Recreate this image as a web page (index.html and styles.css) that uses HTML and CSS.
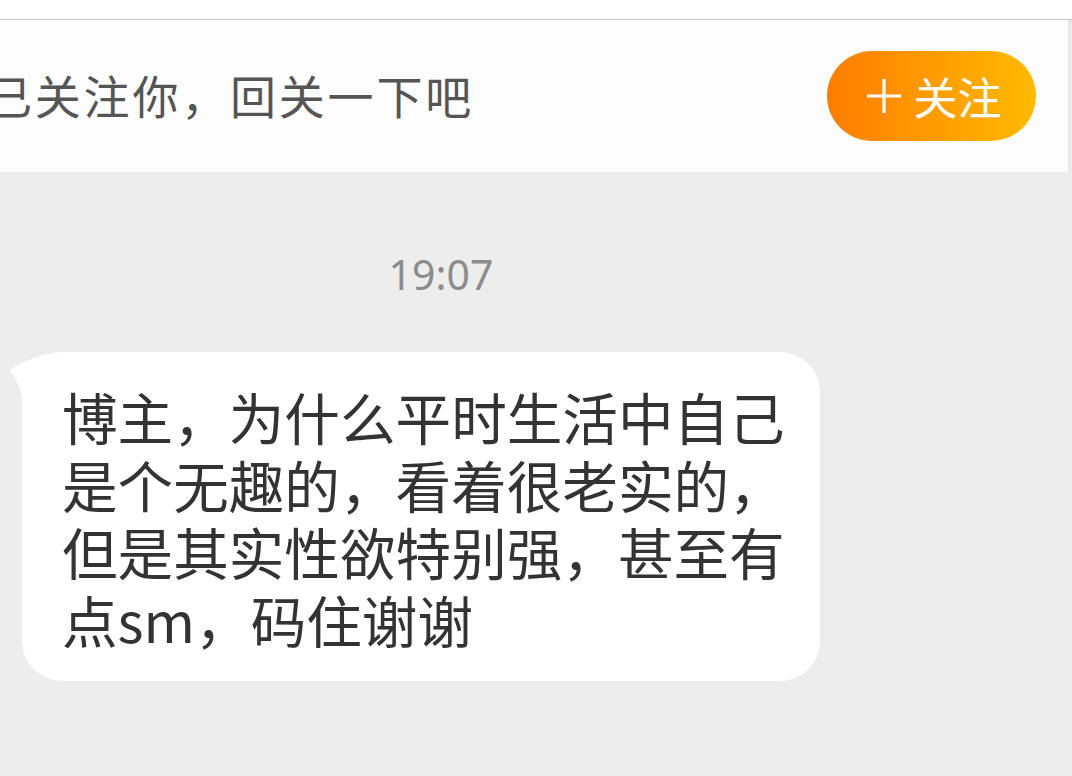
FILE: index.html
```html
<!DOCTYPE html>
<html lang="zh-CN">

<head>
    <meta charset="UTF-8">
    <meta name="viewport" content="width=device-width, initial-scale=1.0">
    <title>私信</title>
    <link rel="stylesheet" href="styles.css">
</head>

<body>
    <div class="top-strip"></div>

    <div class="follow-bar">
        <p class="follow-tip">已关注你，回关一下吧</p>
        <button type="button" class="follow-btn">
            <svg class="plus" width="36" height="36" viewBox="0 0 36 36">
                <path d="M18 1 V35 M1 18 H35" stroke="#fff" stroke-width="3.2" fill="none" />
            </svg>
            <span>关注</span>
        </button>
    </div>

    <div class="chat">
        <div class="time">19:07</div>

        <div class="msg">
            <svg class="tail" width="40" height="60" viewBox="0 0 40 60">
                <path d="M40 2 C28 4 16 10 4 16 Q0 19 4 22 C10 30 14 40 16 60 L40 60 Z" fill="#fff" />
            </svg>
            <div class="bubble">
                博主，为什么平时生活中自己<br>
                是个无趣的，看着很老实的，<br>
                但是其实性欲特别强，甚至有<br>
                点sm，码住谢谢
            </div>
        </div>
    </div>
</body>

</html>
```

FILE: styles.css
```css
body {
    margin: 0;
    width: 1072px;
    height: 776px;
    overflow: hidden;
    background: #ededed;
    font-family: 'Noto Sans CJK SC', 'Noto Sans', sans-serif;
}

.top-strip {
    height: 19px;
    background: #fff;
    border-bottom: 1px solid #c9c9c9;
    box-shadow: 0 2px 3px rgba(0, 0, 0, 0.06);
}

.follow-bar {
    height: 152px;
    background: #fdfdfd;
    display: flex;
    align-items: center;
    justify-content: space-between;
    padding-right: 32px;
    border-right: 1px solid #e2e2e2;
    box-sizing: border-box;
    width: 1069px;
}

.follow-tip {
    margin: 0 0 0 -14px;
    font-size: 46px;
    letter-spacing: 2.8px;
    color: #555;
    padding-bottom: 4px;
}

.follow-btn {
    width: 209px;
    height: 90px;
    border: none;
    border-radius: 45px;
    background: linear-gradient(90deg, #ff7d00, #ffba00);
    color: #fff;
    font-family: inherit;
    font-size: 44px;
    display: flex;
    align-items: center;
    justify-content: center;
    gap: 12px;
    padding: 0 0 0 4px;
    margin-top: 0;
}

.plus {
    display: block;
}

/* chat area */
.chat {
    padding: 78px 0 0;
}

.time {
    text-align: center;
    font-family: 'Noto Sans', sans-serif;
    font-size: 41px;
    color: #8c8c8c;
    margin-left: -190px;
    line-height: 48px;
}

.msg {
    position: relative;
    margin: 54px 0 0 22px;
    width: 798px;
}

.tail {
    position: absolute;
    left: -14px;
    top: 0;
}

.bubble {
    position: relative;
    background: #fff;
    border-radius: 40px;
    padding: 31px 20px 28px 40px;
    font-size: 55.6px;
    line-height: 67.5px;
    color: #333;
    white-space: nowrap;
}
```
